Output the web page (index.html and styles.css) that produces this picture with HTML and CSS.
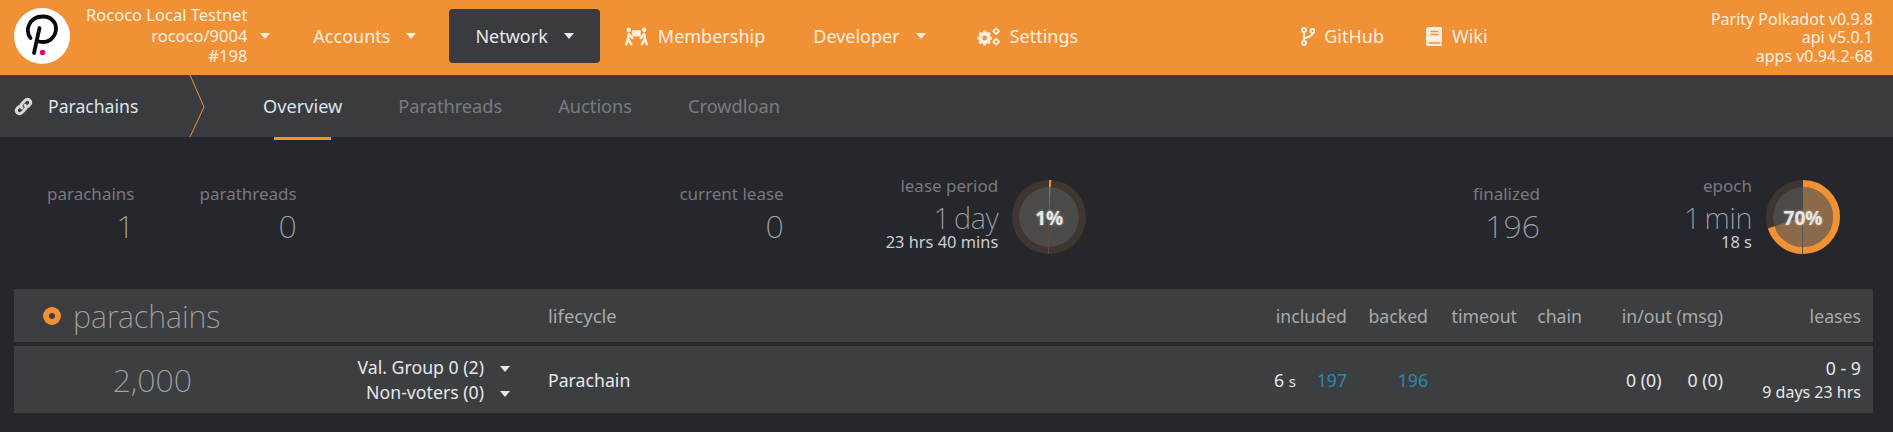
FILE: index.html
```html
<!DOCTYPE html>
<html lang="en">
<head>
<meta charset="utf-8">
<title>Parachains</title>
<link rel="stylesheet" href="styles.css">
</head>
<body>
<header class="menu">
  <div class="logo">
    <svg viewBox="0 0 56 56" width="56" height="56">
      <circle cx="28" cy="28" r="28" fill="#fff"/>
      <path d="M16.500 30C13 26 13.500 20 15 17c2.500-6 8-8.500 14-8.500 8 0 13 5.500 13 12 0 7.500-6 13.500-13 13.500-2 0-4-.3-6-1M25.500 20L20 45" fill="none" stroke="#0b0b0b" stroke-width="3.800" stroke-linecap="round"/>
      <circle cx="28.500" cy="44.500" r="2.700" fill="#e6007a"/>
    </svg>
  </div>
  <div class="chain">
    <div class="chain-text">
      <div>Rococo Local Testnet</div>
      <div>rococo/9004</div>
      <div>#198</div>
    </div>
    <span class="caret"></span>
  </div>
  <nav class="nav nav-main">
    <a class="item">Accounts<span class="caret caret-gap"></span></a>
    <a class="item item-active">Network<span class="caret caret-gap"></span></a>
    <a class="item item-icon item-tight">
      <svg class="ico ico-carry" viewBox="0 0 24 19"><g fill="currentColor"><circle cx="4" cy="2.500" r="2.300"/><circle cx="20" cy="2.500" r="2.300"/><rect x="7.500" y="3" width="9" height="6.500" rx=".5"/></g><g fill="none" stroke="currentColor" stroke-width="2.600" stroke-linecap="round" stroke-linejoin="round"><path d="M4 7l-.8 5-1.900 5.500M3.400 12.500l3 5M4.500 7.500l3 3.500"/><path d="M20 7l.8 5 1.900 5.500M20.600 12.500l-3 5M19.500 7.500l-3 3.500"/></g></svg>
      Membership
    </a>
    <a class="item">Developer<span class="caret caret-gap"></span></a>
    <a class="item item-icon">
      <svg class="ico ico-cogs" viewBox="0 0 24 19"><g fill="currentColor"><path d="M6.700 3.300h2.600l.4 1.800 1.300.6 1.600-1 1.800 1.900-1 1.500.5 1.400 1.800.4v2.600l-1.800.4-.5 1.300 1 1.600-1.800 1.800-1.600-1-1.300.5-.4 1.800H6.700l-.4-1.800-1.300-.5-1.600 1-1.800-1.800 1-1.600-.5-1.300-1.800-.4V9.900l1.800-.4.5-1.400-1-1.500 1.800-1.900 1.600 1 1.300-.6z"/></g><circle cx="8" cy="11" r="2.500" fill="#f19135"/><g fill="none" stroke="currentColor"><circle cx="20" cy="4" r="2.300" stroke-width="1.800"/><circle cx="20" cy="15" r="2.300" stroke-width="1.800"/><path d="M20 0v1M20 7v1M16 4h1M23 4h1M20 11v1M20 18v1M16 15h1M23 15h1" stroke-width="1.600"/></g></svg>
      Settings
    </a>
  </nav>
  <nav class="nav extern">
    <a class="item item-icon">
      <svg class="ico ico-branch" viewBox="0 0 14 19"><g fill="none" stroke="currentColor" stroke-width="2"><circle cx="3" cy="3" r="2"/><circle cx="3" cy="16" r="2"/><circle cx="11.500" cy="4" r="2"/><path d="M3 5v9M3 12.500c0-3 8.500-1.500 8.500-6.500"/></g></svg>
      GitHub
    </a>
    <a class="item item-icon">
      <svg class="ico ico-book" viewBox="0 0 16 19"><path fill="currentColor" d="M2.500 0H15a1 1 0 0 1 1 1v13a1 1 0 0 1-.6.900c-.2.800-.2 1.600 0 2.300.4.300.6.500.6.800a1 1 0 0 1-1 1H2.500A2.500 2.500 0 0 1 0 16.500v-14A2.500 2.500 0 0 1 2.500 0z"/><path d="M4.500 4.500h8M4.500 7.500h8M2.500 16h11.500" stroke="#f19135" stroke-width="1.400" fill="none"/></svg>
      Wiki
    </a>
  </nav>
  <div class="version">
    <div>Parity Polkadot v0.9.8</div>
    <div>api v5.0.1</div>
    <div>apps v0.94.2-68</div>
  </div>
</header>

<section class="tabs">
  <div class="tabs-title">
    <svg class="ico-link" viewBox="0 0 19 19"><g fill="none" stroke="currentColor" stroke-width="3" stroke-linecap="round"><path d="M8 11c-1.500-1.500-1.500-3 0-4.500l3-3c1.500-1.500 3.500-1.500 4.700-.2s1.300 3.200-.2 4.700l-1.500 1.500"/><path d="M11 8c1.500 1.500 1.500 3 0 4.500l-3 3c-1.500 1.500-3.500 1.500-4.700.2s-1.300-3.200.2-4.700L5 9.500"/></g></svg>
    <span>Parachains</span>
    <svg class="tabs-chevron" viewBox="0 0 16 62"><path d="M1 0l14 32L1 62" fill="none" stroke="#f19135" stroke-width="1"/></svg>
  </div>
  <a class="tab tab-active">Overview</a>
  <a class="tab">Parathreads</a>
  <a class="tab">Auctions</a>
  <a class="tab">Crowdloan</a>
</section>

<section class="summary">
  <div class="group group-left">
    <div class="stat"><div class="label">parachains</div><div class="big">1</div></div>
    <div class="stat"><div class="label">parathreads</div><div class="big">0</div></div>
  </div>
  <div class="group group-mid">
    <div class="stat"><div class="label">current lease</div><div class="big">0</div></div>
    <div class="stat stat-prog">
      <div class="prog-text">
        <div class="label">lease period</div>
        <div class="big">1 day</div>
        <div class="sub">23 hrs 40 mins</div>
      </div>
      <div class="pie">
        <svg viewBox="0 0 74 74" width="74" height="74">
          <circle cx="37" cy="37" r="33.500" class="ring-bg"/>
          <circle cx="37" cy="37" r="30" class="core-bg"/>
          <circle cx="37" cy="37" r="15" class="core-fill" pathLength="100" stroke-dasharray="1 100" transform="rotate(-90 37 37)"/>
          <circle cx="37" cy="37" r="33.500" class="ring-fill" pathLength="100" stroke-dasharray="1 100" transform="rotate(-90 37 37)"/>
          <path d="M36.500 37v37" class="seam"/>
        </svg>
        <span class="pie-label">1%</span>
      </div>
    </div>
  </div>
  <div class="group group-right">
    <div class="stat"><div class="label">finalized</div><div class="big">196</div></div>
    <div class="stat stat-prog">
      <div class="prog-text">
        <div class="label">epoch</div>
        <div class="big">1 min</div>
        <div class="sub">18 s</div>
      </div>
      <div class="pie">
        <svg viewBox="0 0 74 74" width="74" height="74">
          <circle cx="37" cy="37" r="33.500" class="ring-bg"/>
          <circle cx="37" cy="37" r="30" class="core-bg"/>
          <circle cx="37" cy="37" r="15" class="core-fill" pathLength="100" stroke-dasharray="70 100" transform="rotate(-90 37 37)"/>
          <circle cx="37" cy="37" r="33.500" class="ring-fill" pathLength="100" stroke-dasharray="70 100" transform="rotate(-90 37 37)"/>
          <path d="M36.500 37v37" class="seam seam-strong"/>
        </svg>
        <span class="pie-label">70%</span>
      </div>
    </div>
  </div>
</section>

<section class="table">
  <div class="grid head">
    <div class="c-title"><span class="dot"></span><span class="title">parachains</span></div>
    <div class="c-life c-life-head">lifecycle</div>
    <div class="c-r">included</div>
    <div class="c-r">backed</div>
    <div class="c-r">timeout</div>
    <div class="c-r">chain</div>
    <div class="c-r c-msg">in/out (msg)</div>
    <div class="c-r c-last">leases</div>
  </div>
  <div class="grid row">
    <div class="c-r c-num">2,000</div>
    <div class="c-vals">
      <div>Val. Group 0 (2)<span class="caret caret-gap"></span></div>
      <div>Non-voters (0)<span class="caret caret-gap"></span></div>
    </div>
    <div class="c-life">Parachain</div>
    <div class="c-r c-inc"><span>6 <small>s</small></span><a class="link">197</a></div>
    <div class="c-r"><a class="link">196</a></div>
    <div class="c-r"></div>
    <div class="c-r"></div>
    <div class="c-r c-msg c-io"><span>0 (0)</span><span>0 (0)</span></div>
    <div class="c-r c-last"><div>0 - 9</div><div class="c-time">9 days 23 hrs</div></div>
  </div>
</section>
</body>
</html>
```
FILE: styles.css
```css
* { box-sizing: border-box; }
html, body { margin: 0; padding: 0; }
body {
  background: #26272c;
  color: #e4e5e6;
  font-family: "Noto Sans", "Liberation Sans", sans-serif;
  font-size: 16px;
  height: 432px;
  overflow: hidden;
}

.menu {
  display: flex;
  align-items: center;
  height: 75px;
  padding: 0 20px 3px 14px;
  background: #f19135;
  color: #fdf0e1;
}
.logo { width: 56px; height: 56px; display: flex; }
.chain { display: flex; align-items: center; margin-left: 16px; }
.chain-text { text-align: right; font-size: 16.500px; line-height: 20.500px; }
.caret {
  display: inline-block;
  width: 0;
  height: 0;
  margin-left: 12.500px;
  border-left: 5.500px solid transparent;
  border-right: 5.500px solid transparent;
  border-top: 6.500px solid currentColor;
}
.caret-gap { margin-left: 16px; vertical-align: 2px; }

.nav { display: flex; align-items: center; gap: 7px; }
.nav-main { margin-left: 17.500px; }
.extern { margin-left: 188px; }
.item {
  display: flex;
  align-items: center;
  height: 54px;
  padding: 0 26px;
  font-size: 18px;
  border-radius: 4px;
}
.item-active { background: #3a3b3f; color: #e4e8ec; }
.item-icon { padding: 0 17px 0 18px; }
.item-tight { padding-right: 15px; }
.ico { height: 19px; margin-right: 10px; flex: none; }
.ico-carry { width: 23px; }
.ico-cogs { width: 23px; }
.ico-branch { width: 14px; margin-right: 9px; }
.ico-book { width: 16px; }
.version {
  margin-left: auto;
  margin-top: 3px;
  text-align: right;
  font-size: 16px;
  line-height: 18.500px;
}

.tabs {
  display: flex;
  align-items: stretch;
  height: 62px;
  background: #3a3b3f;
  color: #787b7f;
  font-size: 18.200px;
}
.tabs-title {
  display: flex;
  align-items: center;
  width: 205px;
  padding-left: 14px;
  font-size: 17.600px;
  color: #dde3ea;
  position: relative;
}
.ico-link { width: 19px; height: 19px; margin-right: 15px; color: #d8d8d8; }
.tabs-chevron { position: absolute; left: 189px; top: 0; width: 16px; height: 62px; }
.tab {
  display: flex;
  align-items: center;
  padding: 0 28px;
  position: relative;
}
.tab-active { color: #dde3ea; margin-left: 30px; }
.tab-active::after {
  content: "";
  position: absolute;
  left: 39px;
  right: 39px;
  bottom: -3px;
  height: 3px;
  background: #f19135;
}

.summary {
  display: flex;
  justify-content: space-between;
  align-items: flex-start;
  padding: 36px 53px 0 47px;
  height: 152px;
}
.group { display: flex; align-items: flex-start; }
.group-left { gap: 65px; }
.group-mid { gap: 102px; margin-right: 4px; }
.group-right { gap: 144px; }
.stat { text-align: right; padding-top: 10px; }
.stat-prog { display: flex; align-items: flex-start; gap: 14px; padding-top: 0; }
.prog-text { padding-top: 2px; }
.label { font-size: 17px; line-height: 22px; color: #77797d; }
.big {
  font-size: 32px;
  font-weight: 200;
  line-height: 40px;
  margin-top: 1px;
  color: #a3a5a8;
}
.prog-text .big { font-size: 29px; line-height: 30px; margin-top: 6px; letter-spacing: -.3px; word-spacing: -3px; }
.sub { font-size: 16.400px; line-height: 18px; color: #ccced0; }
.pie { position: relative; width: 74px; height: 74px; margin-top: 7px; }
.pie svg { display: block; }
.ring-bg { fill: none; stroke: #3f3630; stroke-width: 7; }
.core-bg { fill: #4c4a48; }
.ring-fill { fill: none; stroke: #f19135; stroke-width: 7; }
.core-fill { fill: none; stroke: #8a6a48; stroke-width: 30; }
.seam { stroke: #5c4a3c; stroke-width: 1; }
.seam-strong { stroke: #55504a; }
.pie-label {
  position: absolute;
  left: 0;
  right: 0;
  top: 25px;
  text-align: center;
  font-size: 19px;
  font-weight: 700;
  line-height: 26px;
  color: #e8e8e8;
  text-shadow: 0 0 3px rgba(255, 255, 255, .45);
}

.table { margin: 0 20px 0 14px; }
.grid {
  display: grid;
  grid-template-columns: 190px 331px 725px 97px 81px 89px 65px 139px 142px;
  align-items: center;
  background: #3d3e40;
}
.head { height: 53px; color: #a9aaab; font-size: 17.700px; }
.row { height: 67px; margin-top: 4px; color: #e4e8ec; font-size: 17.700px; }
.c-title { grid-column: span 2; display: flex; align-items: center; padding-left: 29px; }
.dot {
  width: 18px;
  height: 18px;
  margin-right: 12px;
  border-radius: 50%;
  border: 6px solid #f19135;
  background: #3d3e40;
}
.title { font-size: 30.500px; font-weight: 200; line-height: 40px; color: #a3a5a8; }
.c-life { padding-left: 13px; }
.c-life-head { font-size: 18.500px; }
.c-r { text-align: right; padding-right: 10px; }
.c-msg { padding-right: 8px; }
.c-last { padding-right: 12px; line-height: 24px; }
.c-time { font-size: 16px; }
.c-num { font-size: 32px; font-weight: 200; color: #a3a5a8; padding-right: 12px; }
.c-vals { text-align: right; padding: 1px 25px 0 0; line-height: 25px; }
.c-inc { display: flex; justify-content: space-between; padding-left: 14px; }
.c-io { display: flex; justify-content: flex-end; gap: 26px; }
small { font-size: 15px; }
.link { color: #2a86ae; }
```
